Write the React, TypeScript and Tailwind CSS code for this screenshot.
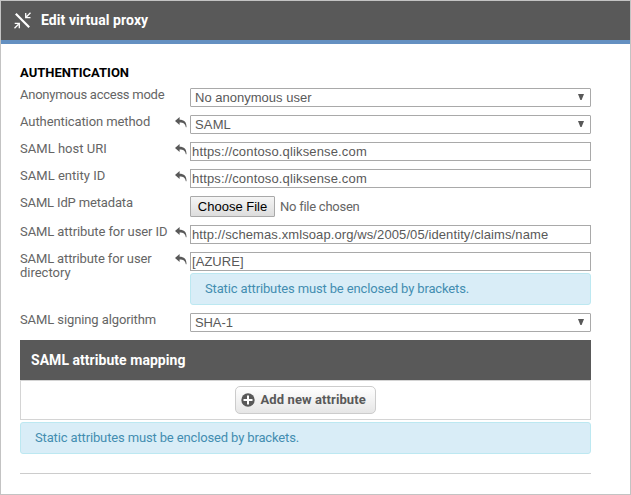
import type { ReactNode } from 'react';

const labelFont = "font-['Roboto','Liberation_Sans',sans-serif]";
const fieldFont = "font-['Liberation_Sans',Arial,sans-serif]";

function UndoIcon() {
  return (
    <svg className="mt-[2px] h-[11px] w-[12px] shrink-0" viewBox="0 0 12 11" fill="#595959">
      <path d="M0 4 4.600 0v2.700C9 2.700 11.700 5 11.500 10.200L10.800 10.200C10.300 6.800 8.300 5.500 4.600 5.500V8Z" />
    </svg>
  );
}

function Row({ label, undo, children }: { label: ReactNode; undo?: boolean; children: ReactNode }) {
  return (
    <div className="flex items-start">
      <div className={`w-[155px] shrink-0 whitespace-nowrap text-[13px] leading-[14px] text-[#656565] ${labelFont}`}>{label}</div>
      <div className="flex w-[15px] shrink-0">{undo && <UndoIcon />}</div>
      <div className="min-w-0 flex-1">{children}</div>
    </div>
  );
}

function Select({ value, tracking }: { value: string; tracking: string }) {
  return (
    <div className={`flex h-[19px] items-center justify-between rounded-[1px] border border-[#a9a9a9] bg-white pr-[6px] pl-1 text-[13px] text-[#595959] ${fieldFont}`}>
      <span className={`leading-[17px] ${tracking}`}>{value}</span>
      <svg className="mb-[1px] h-[6px] w-[6px]" viewBox="0 0 6 6" fill="#595959">
        <path d="M0 0H6L3.600 6H2.400Z" />
      </svg>
    </div>
  );
}

function Field({ value, tracking }: { value: string; tracking: string }) {
  return (
    <div className={`h-[19px] border border-[#a9a9a9] bg-white pl-px text-[13px] leading-[18px] text-[#595959] ${fieldFont}`}>
      <span className={tracking}>{value}</span>
    </div>
  );
}

function Notice() {
  return (
    <div className={`flex h-8 items-center rounded-[3px] border border-[#bce8f1] bg-[#d9edf7] pb-px pl-[14px] text-[13px] text-[#438db1] ${labelFont}`}>
      <span className="tracking-[-0.140px]">Static attributes must be enclosed by brackets.</span>
    </div>
  );
}

export default function App() {
  return (
    <div className="h-[495px] w-[631px] overflow-hidden border border-[#c3c3c3] bg-white">
      <header className={`flex h-[43px] items-center border-b-4 border-[#6490c1] bg-[#595959] pl-[13px] text-white ${labelFont}`}>
        <svg className="h-[17px] w-[17px]" viewBox="0 0 17 17" fill="none" stroke="#fff">
          <path d="M1.800 1.800 15.200 15.200" strokeWidth="2.200" />
          <path d="M16.500 0.800 12.500 4.800M11.700 1v4.600h4.800M0.500 16.200 4.500 12.200M0.700 11.400H5.300v4.800" strokeWidth="1.300" />
        </svg>
        <h1 className="ml-[10px] text-[14px] font-bold tracking-[0.080px]">Edit virtual proxy</h1>
      </header>

      <main className="pt-[22px] pr-[39px] pl-[19px]">
        <h2 className={`h-[22px] text-[13px] leading-[14px] font-bold text-black ${labelFont}`}>AUTHENTICATION</h2>

        <div className="flex flex-col gap-2">
          <Row label={<span className="tracking-[-0.250px]">Anonymous access mode</span>}>
            <Select value="No anonymous user" tracking="tracking-[0.010px]" />
          </Row>
          <Row label={<span className="tracking-[-0.090px]">Authentication method</span>} undo>
            <Select value="SAML" tracking="tracking-[0.150px]" />
          </Row>
          <Row label={<span className="tracking-[0.030px]">SAML host URI</span>} undo>
            <Field value="https://contoso.qliksense.com" tracking="tracking-[0.150px]" />
          </Row>
          <Row label={<span className="tracking-[0.030px]">SAML entity ID</span>} undo>
            <Field value="https://contoso.qliksense.com" tracking="tracking-[0.150px]" />
          </Row>
          <Row label={<span className="tracking-[-0.150px]">SAML IdP metadata</span>}>
            <div className="flex h-[21px] items-center text-[13px]">
              <button className={`h-[21px] w-[85px] rounded-[1px] border border-[#a9a9a9] bg-linear-to-b from-[#f5f5f5] to-[#dddddd] text-[13px] leading-[19px] whitespace-nowrap text-black ${fieldFont}`}>
                Choose File
              </button>
              <span className={`ml-[5px] tracking-[-0.250px] text-[#656565] ${labelFont}`}>No file chosen</span>
            </div>
          </Row>
          <Row label={<span className="tracking-[-0.090px]">SAML attribute for user ID</span>} undo>
            <Field value="http://schemas.xmlsoap.org/ws/2005/05/identity/claims/name" tracking="tracking-[0.100px]" />
          </Row>
          <Row
            label={
              <>
                <span className="tracking-[-0.130px]">SAML attribute for user</span>
                <br />
                <span className="tracking-[-0.020px]">directory</span>
              </>
            }
            undo
          >
            <div className="flex flex-col gap-[2px]">
              <Field value="[AZURE]" tracking="tracking-[0.050px]" />
              <Notice />
            </div>
          </Row>
          <Row label={<span className="tracking-[-0.100px]">SAML signing algorithm</span>}>
            <Select value="SHA-1" tracking="tracking-[-0.100px]" />
          </Row>
        </div>

        <section className="mt-2 mb-[2px]">
          <h3 className={`flex h-10 items-center bg-[#595959] pl-[11px] text-[14px] font-bold tracking-[0.040px] text-white ${labelFont}`}>
            SAML attribute mapping
          </h3>
          <div className="flex h-10 items-center justify-center border border-[#d4d4d4]">
            <button className={`flex h-7 w-[141px] items-center rounded-[5px] border border-[#cccccc] bg-linear-to-b from-white to-[#e6e6e6] pl-[5px] text-[13px] font-bold tracking-[0.100px] whitespace-nowrap text-[#595959] ${labelFont}`}>
              <svg className="mr-[5.500px] h-[14px] w-[14px]" viewBox="0 0 14 14">
                <circle cx="7" cy="7" r="6.700" fill="#595959" />
                <path d="M7 2.500v9M2.500 7h9" stroke="#fff" strokeWidth="2" />
              </svg>
              Add new attribute
            </button>
          </div>
        </section>
        <Notice />
        <hr className="mt-[19px] border-t border-[#cccccc]" />
      </main>
    </div>
  );
}
